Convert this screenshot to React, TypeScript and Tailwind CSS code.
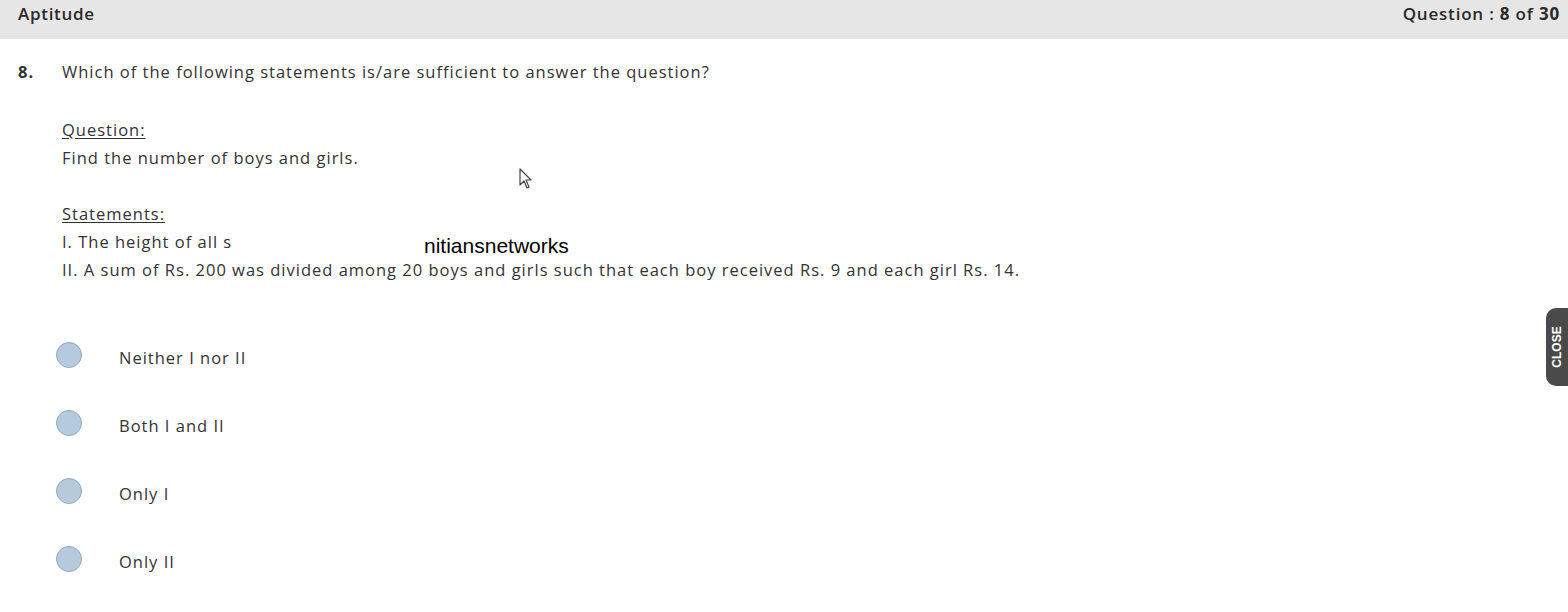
export default function App() {
  const options = ["Neither I nor II", "Both I and II", "Only I", "Only II"];
  return (
    <div className="relative h-[612px] w-[1568px] overflow-hidden bg-white text-[#333] font-['Open_Sans',sans-serif]">
      {/* HEADER */}
      <div className="flex h-[39px] items-start justify-between bg-[#e6e6e6] pl-[18px] pr-[8px] pt-[1px]">
        <span className="text-[17px] font-semibold tracking-[0.7px] text-[#2b2b2b]">Aptitude</span>
        <span className="text-[17px] font-semibold tracking-[0.8px] text-[#2b2b2b]">
          Question : <b className="font-bold">8</b> of <b className="font-bold">30</b>
        </span>
      </div>

      {/* QUESTION */}
      <div className="flex pl-[18px] pt-[21px] text-[16.5px] tracking-[1px]">
        <span className="w-[44px] font-bold">8.</span>
        <div>
          <p className="leading-[24px]">Which of the following statements is/are sufficient to answer the question?</p>
          <p className="mt-[32px] leading-[28px] underline underline-offset-2">Question:</p>
          <p className="leading-[28px]">Find the number of boys and girls.</p>
          <p className="mt-[28px] leading-[28px] underline underline-offset-2">Statements:</p>
          <p className="leading-[28px]">I. The height of all s</p>
          <p className="leading-[28px]">II. A sum of Rs. 200 was divided among 20 boys and girls such that each boy received Rs. 9 and each girl Rs. 14.</p>
        </div>
      </div>

      {/* OPTIONS */}
      <div className="mt-[58px] flex flex-col gap-[42px] pl-[56px]">
        {options.map((o) => (
          <label key={o} className="flex h-[26px] items-center">
            <span className="h-[26px] w-[26px] rounded-full border border-[#8fa9c0] bg-[#b5cadd]" />
            <span className="ml-[37px] mt-[7px] text-[16.5px] tracking-[1px]">{o}</span>
          </label>
        ))}
      </div>

      {/* WATERMARK */}
      <span className="absolute left-[424px] top-[233px] font-['Liberation_Sans',sans-serif] text-[21px] leading-[26px] text-black">
        nitiansnetworks
      </span>

      {/* CURSOR */}
      <svg className="absolute left-[519px] top-[168px]" width="14" height="22" viewBox="0 0 14 22">
        <path d="M1 1 L1 17 L5 13 L8 20 L10 19 L7 12 L12 12 Z" fill="white" stroke="#444" strokeWidth="1.2" strokeLinejoin="round" />
      </svg>

      {/* CLOSE TAB */}
      <div className="absolute right-0 top-[308px] flex h-[78px] w-[22px] items-center justify-center rounded-l-[10px] bg-[#4a4a4a]">
        <span className="-rotate-90 font-['Liberation_Sans',sans-serif] text-[12px] font-bold text-white">CLOSE</span>
      </div>
    </div>
  );
}
